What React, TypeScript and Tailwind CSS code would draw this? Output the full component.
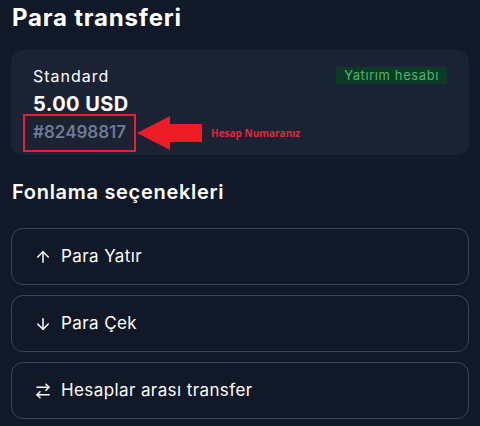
import { ArrowUp, ArrowDown, ArrowRightLeft } from "lucide-react";

const options = [
  { icon: ArrowUp, label: "Para Yatır" },
  { icon: ArrowDown, label: "Para Çek" },
  { icon: ArrowRightLeft, label: "Hesaplar arası transfer" },
];

export default function App() {
  return (
    <div className="w-[480px] h-[426px] overflow-hidden bg-[#111827] text-white font-['Inter',sans-serif] px-[11px]">
      <h1 className="text-[24px] font-bold leading-none pt-[6px] pl-[1px] tracking-[0.8px]">Para transferi</h1>

      <div className="mt-[20px] h-[105px] rounded-[12px] bg-[#1a2234] pl-[22px] pr-[22px] pt-[16px]">
        <div className="flex items-start justify-between">
          <span className="text-[16px] leading-5 tracking-[1px]">Standard</span>
          <span className="mt-[1px] bg-[#0c3a25] text-[#48b870] text-[13px] leading-[17px] px-[8px] tracking-[0.6px]">Yatırım hesabı</span>
        </div>
        <div className="text-[20px] font-bold leading-6 mt-[6px] tracking-[0.4px]">5.00 USD</div>
        <div className="flex items-center mt-[-2px] ml-[-10px]">
          <div className="border-2 border-[#e0242c] w-[113px] h-[38px] flex items-center pl-[8px]">
            <span className="text-[17px] font-semibold text-[#6f7a93]">#82498817</span>
          </div>
          <svg width="66" height="36" viewBox="0 0 66 36" className="ml-[1px]">
            <polygon points="0,18 33,1 33,9 65,9 65,27 33,27 33,35" fill="#ee1c25" />
          </svg>
          <span className="ml-[8px] text-[10px] font-bold text-[#e0283a] font-['Open_Sans',sans-serif]">Hesap Numaranız</span>
        </div>
      </div>

      <h2 className="text-[20px] font-semibold leading-none mt-[27px] pl-[1px] tracking-[0.7px]">Fonlama seçenekleri</h2>

      <div className="mt-[26px] flex flex-col gap-[10px]">
        {options.map(({ icon: Icon, label }) => (
          <div key={label} className="h-[57px] rounded-[12px] border border-[#3b4557] flex items-center pl-[22px] gap-[9px]">
            <Icon size={18} strokeWidth={2} />
            <span className="text-[17px] tracking-[0.4px]">{label}</span>
          </div>
        ))}
      </div>
    </div>
  );
}
